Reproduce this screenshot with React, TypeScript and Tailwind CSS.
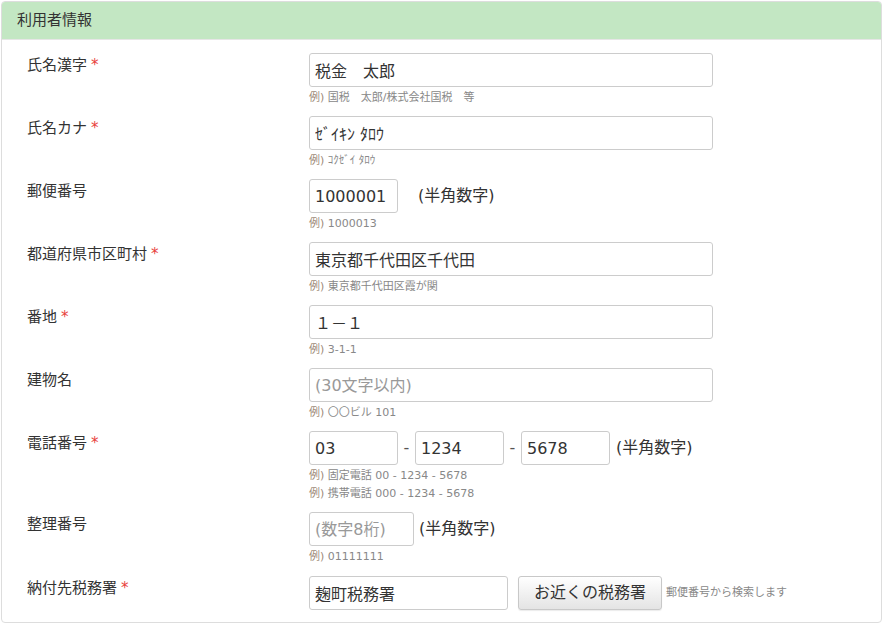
import type { ReactNode } from "react";

const font = {
  fontFamily: '"DejaVu Sans", "Noto Sans CJK JP", sans-serif',
};

function Hint({ children }: { children: ReactNode }) {
  return (
    <p className="text-[11px] leading-[18px] text-[#888]">
      <span className="text-[#9d8a78]">例)</span> {children}
    </p>
  );
}

function Field({
  label,
  required,
  children,
  hints = [],
  last,
}: {
  label: string;
  required?: boolean;
  children: ReactNode;
  hints?: ReactNode[];
  last?: boolean;
}) {
  return (
    <div className={`flex ${last ? "pt-[1px]" : "pb-[9px]"}`}>
      <div className="w-[307px] shrink-0 pl-[25px] pt-[2px] text-[15px] leading-[20px] text-[#333]">
        {label}
        {required && <span className="ml-[4px] text-[#e8413b]">*</span>}
      </div>
      <div className="flex-1">
        <div className="flex items-center">{children}</div>
        {hints.length > 0 && (
          <div className="mt-[2px]">
            {hints.map((h, i) => (
              <Hint key={i}>{h}</Hint>
            ))}
          </div>
        )}
      </div>
    </div>
  );
}

function Input({
  value,
  placeholder,
  width,
}: {
  value?: string;
  placeholder?: string;
  width: string;
}) {
  return (
    <input
      readOnly
      value={value ?? ""}
      placeholder={placeholder}
      className={`${width} h-[34px] rounded-[3px] border border-[#ccc] bg-white px-[5px] text-[16px] text-[#333] outline-none placeholder:text-[#999]`}
      style={font}
    />
  );
}

const Unit = ({ className = "" }: { className?: string }) => (
  <span className={`text-[16px] text-[#333] ${className}`}>(半角数字)</span>
);

const Dash = () => <span className="w-[17px] text-center text-[16px] text-[#555]">-</span>;

export default function App() {
  return (
    <div className="h-[627px] w-[884px] bg-white" style={font}>
      <div className="ml-[1px] mt-[1px] w-[881px] overflow-hidden rounded-[4px] border border-[#ddd] bg-white">
        <div className="flex h-[38px] items-center border-b border-[#e6e6e6] bg-[#c3e7c3] pl-[15px] text-[15px] text-[#333]">
          利用者情報
        </div>
        <div className="pb-[12px] pt-[13px]">
          <Field label="氏名漢字" required hints={["国税　太郎/株式会社国税　等"]}>
            <Input width="w-[404px]" value="税金　太郎" />
          </Field>
          <Field label="氏名カナ" required hints={["ｺｸｾﾞｲ ﾀﾛｳ"]}>
            <Input width="w-[404px]" value="ｾﾞｲｷﾝ ﾀﾛｳ" />
          </Field>
          <Field label="郵便番号" hints={["1000013"]}>
            <Input width="w-[89px]" value="1000001" />
            <Unit className="ml-[20px]" />
          </Field>
          <Field label="都道府県市区町村" required hints={["東京都千代田区霞が関"]}>
            <Input width="w-[404px]" value="東京都千代田区千代田" />
          </Field>
          <Field label="番地" required hints={["3-1-1"]}>
            <Input width="w-[404px]" value="１－１" />
          </Field>
          <Field label="建物名" hints={["〇〇ビル 101"]}>
            <Input width="w-[404px]" placeholder="(30文字以内)" />
          </Field>
          <Field
            label="電話番号"
            required
            hints={["固定電話 00 - 1234 - 5678", "携帯電話 000 - 1234 - 5678"]}
          >
            <Input width="w-[89px]" value="03" />
            <Dash />
            <Input width="w-[89px]" value="1234" />
            <Dash />
            <Input width="w-[89px]" value="5678" />
            <Unit className="ml-[6px]" />
          </Field>
          <Field label="整理番号" hints={["01111111"]}>
            <Input width="w-[105px]" placeholder="(数字8桁)" />
            <Unit className="ml-[5px]" />
          </Field>
          <Field label="納付先税務署" required last>
            <Input width="w-[199px]" value="麹町税務署" />
            <button className="ml-[10px] h-[34px] w-[144px] rounded-[3px] border border-[#c8c8c8] bg-gradient-to-b from-white to-[#e4e4e4] text-[16px] text-[#333] shadow-[0_1px_1px_rgba(0,0,0,0.08)]">
              お近くの税務署
            </button>
            <span className="ml-[4px] text-[11px] text-[#888]">郵便番号から検索します</span>
          </Field>
        </div>
      </div>
    </div>
  );
}
